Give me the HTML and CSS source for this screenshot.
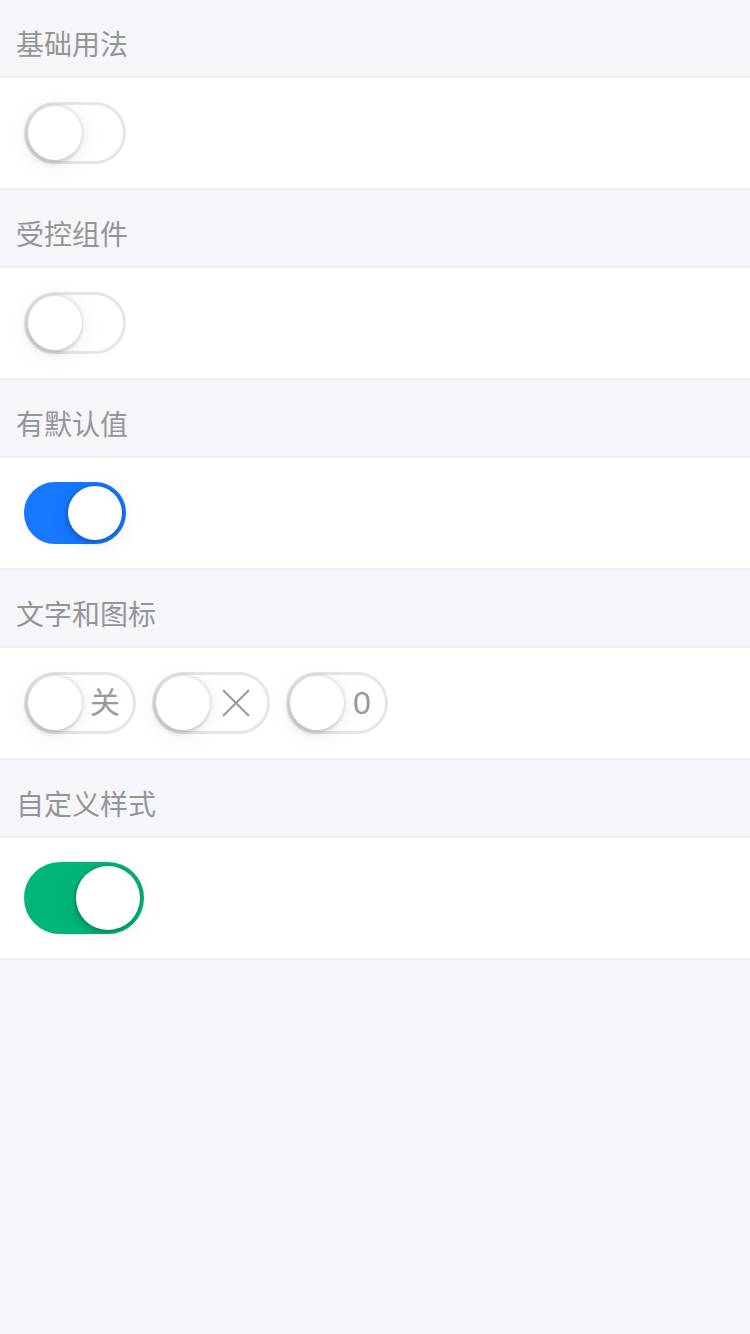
FILE: index.html
```html
<!DOCTYPE html>
<html lang="zh-CN">
<head>
<meta charset="utf-8">
<title>Switch</title>
<link rel="stylesheet" href="styles.css">
</head>
<body>
  <div class="page">
    <div class="block-title">基础用法</div>
    <div class="block-body">
      <div class="switch"><span class="handle"></span></div>
    </div>

    <div class="block-title">受控组件</div>
    <div class="block-body">
      <div class="switch"><span class="handle"></span></div>
    </div>

    <div class="block-title">有默认值</div>
    <div class="block-body">
      <div class="switch checked"><span class="handle"></span></div>
    </div>

    <div class="block-title">文字和图标</div>
    <div class="block-body">
      <div class="switch"><span class="handle"></span><span class="inner">关</span></div>
      <div class="switch"><span class="handle"></span><span class="inner icon"><svg width="36" height="30" viewBox="0 0 36 30"><path d="M5 2 L31 28 M31 2 L5 28" stroke="#999" stroke-width="2" fill="none"/></svg></span></div>
      <div class="switch"><span class="handle"></span><span class="inner digit">0</span></div>
    </div>

    <div class="block-title">自定义样式</div>
    <div class="block-body">
      <div class="switch checked custom"><span class="handle"></span></div>
    </div>
  </div>
</body>
</html>
```

FILE: styles.css
```css
html, body {
  margin: 0;
  padding: 0;
  background: #f5f6fa;
}

body {
  font-family: "Noto Sans", "Liberation Sans", "Noto Sans CJK SC", sans-serif;
  width: 750px;
  min-height: 1334px;
}

.block-title {
  height: 76px;
  box-sizing: border-box;
  padding: 25px 16px 15px;
  font-size: 28px;
  line-height: 36px;
  color: #959595;
  font-family: "Noto Sans CJK SC", sans-serif;
}

.block-body {
  background: #ffffff;
  border-top: 2px solid #eeeeee;
  border-bottom: 2px solid #eeeeee;
  padding: 24px;
  display: flex;
  align-items: center;
  gap: 16px;
}

.switch {
  box-sizing: border-box;
  min-width: 102px;
  height: 62px;
  border: 3px solid #e6e6e6;
  border-radius: 31px;
  background: #ffffff;
  display: flex;
  align-items: center;
}

.handle {
  flex: none;
  width: 54px;
  height: 54px;
  margin: 1px;
  border-radius: 50%;
  background: #ffffff;
  box-shadow: 0 0 4px 0 rgba(0, 0, 0, 0.2), 0 4px 23px 0 rgba(0, 0, 0, 0.08), -2px 4px 4px 0 rgba(0, 0, 0, 0.1);
}

.inner {
  margin: 0 13px 0 7px;
  font-size: 30px;
  line-height: 30px;
  color: #999999;
  font-family: "Liberation Sans", "Noto Sans CJK SC", sans-serif;
}

.inner.digit {
  font-size: 32px;
  margin-left: 8px;
}

.inner.icon {
  display: flex;
}

.switch.checked {
  background: #1677ff;
  border-color: #1677ff;
  justify-content: flex-end;
}

.switch.custom {
  min-width: 120px;
  height: 72px;
  border-radius: 36px;
  background: #00b578;
  border-color: #00b578;
}

.switch.custom .handle {
  width: 64px;
  height: 64px;
}
```
